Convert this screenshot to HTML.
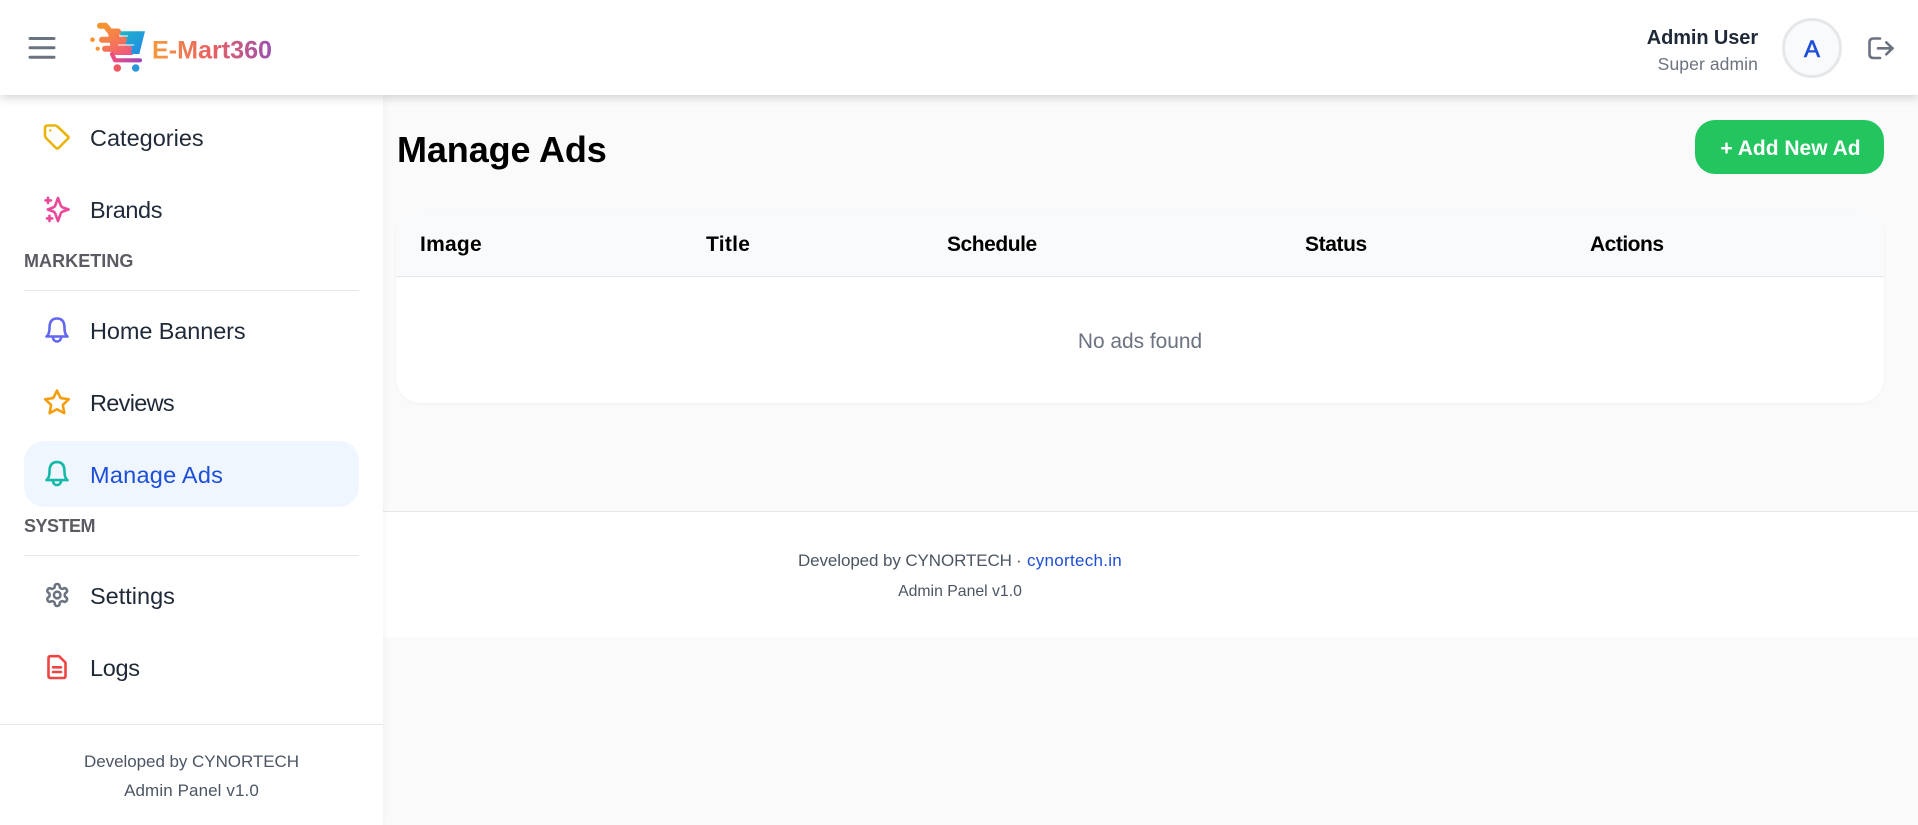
<!DOCTYPE html>
<html lang="en">
<head>
<meta charset="utf-8">
<title>Manage Ads</title>
<style>
html,body{margin:0;padding:0;width:1918px;height:825px;overflow:hidden;background:#fafafa;font-family:"Liberation Sans",sans-serif}
div,a,span{box-sizing:border-box}
.t{position:absolute;white-space:nowrap;line-height:30px}
.nav{font-size:23.5px;color:#1f2937;left:90px}
.sec{font-size:18px;font-weight:700;color:#5b5b63;left:24px}
.th{font-size:21px;font-weight:700;color:#000;top:230.4px}
.sm{font-size:17px;color:#4b5563}
.line{position:absolute;left:24px;width:335px;height:1px;background:#e5e7eb}
#icons{position:absolute;left:0;top:0;fill:none;stroke-width:2.6;stroke-linecap:round;stroke-linejoin:round}
</style>
</head>
<body>
<div style="position:absolute;left:383px;top:511px;width:1535px;height:126px;background:#fff;border-top:1px solid #e5e7eb"></div>
<div style="position:absolute;left:0;top:95px;width:383px;height:730px;background:#fff;box-shadow:0 0 8px rgba(0,0,0,.05)"></div>
<div style="position:absolute;left:24px;top:441px;width:335px;height:66px;border-radius:20px;background:#eff6ff"></div>

<div style="position:absolute;left:0;top:0;width:1918px;height:95px;background:#fff;box-shadow:0 3px 9px rgba(0,0,0,.16)"></div>
<svg style="position:absolute;left:0;top:0" width="70" height="95"><path d="M30 38.5H54M30 47.8H54M30 57.2H54" stroke="#6b7280" stroke-width="3" stroke-linecap="round" fill="none"/></svg>

<svg style="position:absolute;left:80px;top:10px" width="200" height="70" viewBox="80 10 200 70">
<defs>
<linearGradient id="lg" x1="152" y1="0" x2="272" y2="0" gradientUnits="userSpaceOnUse"><stop offset="0" stop-color="#f59a3c"/><stop offset=".5" stop-color="#ea5f62"/><stop offset="1" stop-color="#9b51b0"/></linearGradient>
<linearGradient id="bl" x1="120" y1="30" x2="142" y2="55" gradientUnits="userSpaceOnUse"><stop offset="0" stop-color="#1fb8c4"/><stop offset="1" stop-color="#2287e8"/></linearGradient>
<linearGradient id="or" x1="100" y1="28" x2="122" y2="62" gradientUnits="userSpaceOnUse"><stop offset="0" stop-color="#f7932f"/><stop offset=".55" stop-color="#f4735a"/><stop offset="1" stop-color="#ee4f8a"/></linearGradient>
<linearGradient id="rl" x1="112" y1="0" x2="142" y2="0" gradientUnits="userSpaceOnUse"><stop offset="0" stop-color="#ee4f7a"/><stop offset="1" stop-color="#9b44c0"/></linearGradient>
</defs>
<path d="M118 31.3H145L139.3 54H132Z" fill="url(#bl)"/>
<path d="M108 33H118.5L133 55H112Z" fill="url(#or)"/>
<path d="M100 25.8H105.5L110 31.5H118" stroke="url(#or)" stroke-width="6" fill="none" stroke-linecap="round" stroke-linejoin="round"/>
<path d="M102 39.7H124" stroke="url(#or)" stroke-width="6" stroke-linecap="round" fill="none"/>
<path d="M105 48.7H129" stroke="url(#or)" stroke-width="6" stroke-linecap="round" fill="none"/>
<path d="M119 36H128M118 45H134" stroke="#fff" stroke-width=".9" fill="none"/>
<path d="M112 54L115 60.3H140" stroke="url(#rl)" stroke-width="4.2" fill="none" stroke-linecap="round" stroke-linejoin="round"/>
<circle cx="117.3" cy="68" r="3.8" fill="#ee5a64"/><circle cx="135.7" cy="68" r="3.8" fill="#2b96d8"/>
<circle cx="92.5" cy="39.7" r="2.3" fill="#f7932f"/><circle cx="97.7" cy="48.7" r="2.1" fill="#f7932f"/>
<text x="152" y="58.3" font-size="25" font-weight="700" fill="url(#lg)" textLength="120" lengthAdjust="spacingAndGlyphs" font-family="Liberation Sans, sans-serif">E-Mart360</text>
</svg>

<div class="t" style="right:160px;top:23px;font-size:20px;font-weight:700;color:#1f2937;letter-spacing:-.1px">Admin User</div>
<div class="t" style="right:160px;top:49px;font-size:17.5px;color:#6b7280;letter-spacing:.1px">Super admin</div>
<div style="position:absolute;left:1782px;top:18px;width:60px;height:60px;border-radius:50%;background:#f9fafb;border:3px solid #e5e7eb"></div>
<div class="t" style="left:1782px;width:60px;text-align:center;top:35px;font-size:24px;color:#1d4ed8;-webkit-text-stroke:.6px #1d4ed8">A</div>

<svg id="icons" width="1918" height="825">
<g stroke="#6b7280"><path d="M1880 38.5H1873.5Q1869.5 38.5 1869.5 42.5V54Q1869.5 58 1873.5 58H1880"/><path d="M1878 48.3H1892.5"/><path d="M1886.3 42.4L1892.5 48.3L1886.3 54.3"/></g>
<g stroke="#eab308"><path d="M47.5 125.5H55Q56.5 125.5 57.5 126.5L68 136.5Q69 137.5 68 138.5L58.5 148Q57 149 56 148L46 138Q45 137 45 135.5V128Q45 125.5 47.5 125.5Z"/><circle cx="50.3" cy="130.5" r=".6" fill="#eab308" stroke-width="1.2"/></g>
<g stroke="#ec4899"><path d="M58 198L60.8 205.6Q61.3 206.9 62.6 207.4L68.6 209.5L62.6 211.6Q61.3 212.1 60.8 213.4L58 221L55.2 213.4Q54.7 212.1 53.4 211.6L47.8 209.5L53.4 207.4Q54.7 206.9 55.2 205.6Z"/><path d="M48 197.8V203M45.5 200.4H50.8M49.5 215.8V221M47 218.4H52.2"/></g>
<g stroke="#6366f1"><path d="M57 318.5C51 318.5 49.5 323 49.5 328C49.5 332 48.5 335 46.5 336.5H67.5C65.5 335 64.5 332 64.5 328C64.5 323 63 318.5 57 318.5Z"/><path d="M53 337C53 343 61 343 61 337"/></g>
<g transform="translate(42.8 388.3) scale(1.18)" stroke="#f59e0b" stroke-width="2.2"><polygon points="12 2 15.09 8.26 22 9.27 17 14.14 18.18 21.02 12 17.77 5.82 21.02 7 14.14 2 9.27 8.91 8.26 12 2"/></g>
<g transform="translate(0 143.6)" stroke="#14b8a6"><path d="M57 318.5C51 318.5 49.5 323 49.5 328C49.5 332 48.5 335 46.5 336.5H67.5C65.5 335 64.5 332 64.5 328C64.5 323 63 318.5 57 318.5Z"/><path d="M53 337C53 343 61 343 61 337"/></g>
<g transform="translate(44 581.8) scale(1.1)" stroke="#6b7280" stroke-width="2.3"><path d="M12.22 2h-.44a2 2 0 0 0-2 2v.18a2 2 0 0 1-1 1.73l-.43.25a2 2 0 0 1-2 0l-.15-.08a2 2 0 0 0-2.73.73l-.22.38a2 2 0 0 0 .73 2.73l.15.1a2 2 0 0 1 1 1.72v.51a2 2 0 0 1-1 1.74l-.15.09a2 2 0 0 0-.73 2.73l.22.38a2 2 0 0 0 2.73.73l.15-.08a2 2 0 0 1 2 0l.43.25a2 2 0 0 1 1 1.73V20a2 2 0 0 0 2 2h.44a2 2 0 0 0 2-2v-.18a2 2 0 0 1 1-1.73l.43-.25a2 2 0 0 1 2 0l.15.08a2 2 0 0 0 2.73-.73l.22-.39a2 2 0 0 0-.73-2.73l-.15-.08a2 2 0 0 1-1-1.74v-.5a2 2 0 0 1 1-1.74l.15-.09a2 2 0 0 0 .73-2.73l-.22-.38a2 2 0 0 0-2.73-.73l-.15.08a2 2 0 0 1-2 0l-.43-.25a2 2 0 0 1-1-1.73V4a2 2 0 0 0-2-2z"/><circle cx="12" cy="12" r="3"/></g>
<g stroke="#ef4444"><path d="M50.5 656.2H59L65.5 662.5V676Q65.5 678 63.5 678H50.5Q48.5 678 48.5 676V658.2Q48.5 656.2 50.5 656.2Z"/><path d="M53 667.3H61M53 672H61"/></g>
</svg>

<div class="t nav" style="top:122.5px">Categories</div>
<div class="t nav" style="top:194.5px;letter-spacing:-.4px">Brands</div>

<div class="t sec" style="top:245.8px;letter-spacing:.05px">MARKETING</div>
<div class="line" style="top:290px"></div>

<div class="t nav" style="top:316px;letter-spacing:-.1px">Home Banners</div>
<div class="t nav" style="top:388px;letter-spacing:-.7px">Reviews</div>

<div class="t nav" style="top:459.5px;color:#1d4ed8;letter-spacing:.25px">Manage Ads</div>

<div class="t sec" style="top:510.8px;letter-spacing:-.5px">SYSTEM</div>
<div class="line" style="top:555px"></div>

<div class="t nav" style="top:581px">Settings</div>
<div class="t nav" style="top:653px;letter-spacing:-.3px">Logs</div>

<div style="position:absolute;left:0;top:724px;width:383px;height:1px;background:#e5e7eb"></div>
<div class="t sm" style="left:0;width:383px;text-align:center;top:747px;letter-spacing:-.05px">Developed by CYNORTECH</div>
<div class="t sm" style="left:0;width:383px;text-align:center;top:776px;letter-spacing:.1px">Admin Panel v1.0</div>

<div class="t" style="left:397px;top:135px;font-size:36px;font-weight:700;color:#000;letter-spacing:-.1px">Manage Ads</div>
<div style="position:absolute;left:1695px;top:120px;width:189px;height:54px;border-radius:20px;background:#22c55e"></div>
<div class="t" style="left:1696px;width:189px;text-align:center;top:133.7px;font-size:21px;font-weight:700;color:#fff">+ Add New Ad</div>

<div style="position:absolute;left:396px;top:210px;width:1488px;height:193px;border-radius:24px;background:#fff;box-shadow:0 1px 3px rgba(0,0,0,.04);overflow:hidden">
<div style="height:67px;background:#f9fafb;border-bottom:1px solid #e5e7eb"></div>
</div>
<div class="t th" style="left:420px;letter-spacing:.25px">Image</div>
<div class="t th" style="left:706px;letter-spacing:.3px">Title</div>
<div class="t th" style="left:947px;letter-spacing:-.45px">Schedule</div>
<div class="t th" style="left:1305px;letter-spacing:-.4px">Status</div>
<div class="t th" style="left:1590px;letter-spacing:-.5px">Actions</div>
<div class="t" style="left:396px;width:1488px;text-align:center;top:327px;font-size:20.9px;color:#6b7280">No ads found</div>

<div class="t sm" style="left:798px;top:545.8px;letter-spacing:-.1px">Developed by CYNORTECH</div>
<div class="t sm" style="left:1016px;top:545.8px">·</div>
<a class="t sm" href="#" style="left:1027px;top:545.8px;color:#1d4ed8;text-decoration:none;letter-spacing:.28px">cynortech.in</a>
<div class="t" style="left:0;width:1920px;text-align:center;top:576.8px;font-size:15.8px;color:#4b5563">Admin Panel v1.0</div>
</body>
</html>
